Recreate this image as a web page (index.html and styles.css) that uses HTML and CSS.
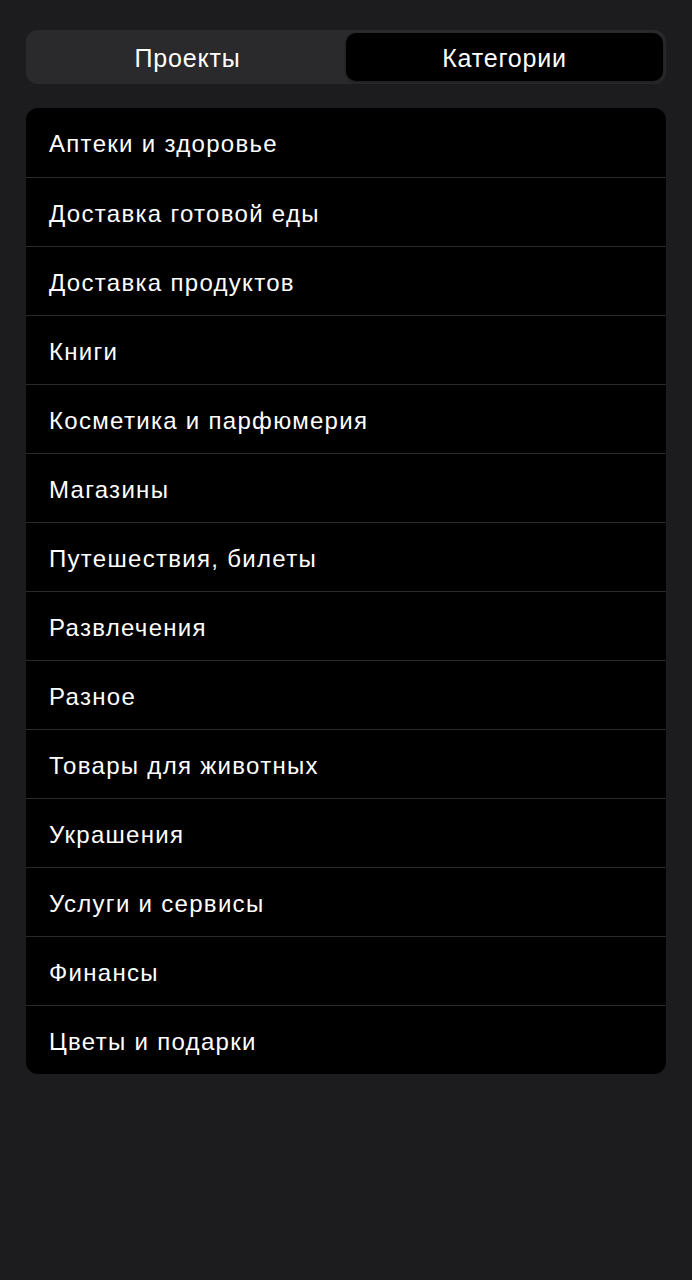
FILE: index.html
```html
<!DOCTYPE html>
<html>
<head>
  <meta charset="UTF-8">
  <title>Категории</title>
  <link rel="stylesheet" href="styles.css">
</head>
<body>
  <div class="tabs">
    <div class="tab">Проекты</div>
    <div class="tab active">Категории</div>
  </div>

  <ul class="list">
    <li>Аптеки и здоровье</li>
    <li>Доставка готовой еды</li>
    <li>Доставка продуктов</li>
    <li>Книги</li>
    <li>Косметика и парфюмерия</li>
    <li>Магазины</li>
    <li>Путешествия, билеты</li>
    <li>Развлечения</li>
    <li>Разное</li>
    <li>Товары для животных</li>
    <li>Украшения</li>
    <li>Услуги и сервисы</li>
    <li>Финансы</li>
    <li>Цветы и подарки</li>
  </ul>
</body>
</html>
```

FILE: styles.css
```css
body { margin: 0; background: #1c1c1e; color: white; font-family: "Liberation Sans", Arial, sans-serif; padding: 30px 26px; }
.tabs { display: flex; background: #2a2a2c; border-radius: 12px; padding: 3px; height: 48px; }
.tab { flex: 1; display: flex; align-items: center; justify-content: center; font-size: 25px; letter-spacing: 0.8px; padding-top: 2px; border-radius: 10px; }
.tab.active { background: #000; box-shadow: 0 1px 3px rgba(0,0,0,0.4); }
.list { list-style: none; margin: 24px 0 0; padding: 0; background: #000; border-radius: 12px; overflow: hidden; }
.list li { height: 69px; display: flex; align-items: center; padding: 3px 0 0 23px; box-sizing: border-box; font-size: 24px; letter-spacing: 1.3px; border-top: 1px solid #2b2b2d; }
.list li:first-child { border-top: none; }
```
